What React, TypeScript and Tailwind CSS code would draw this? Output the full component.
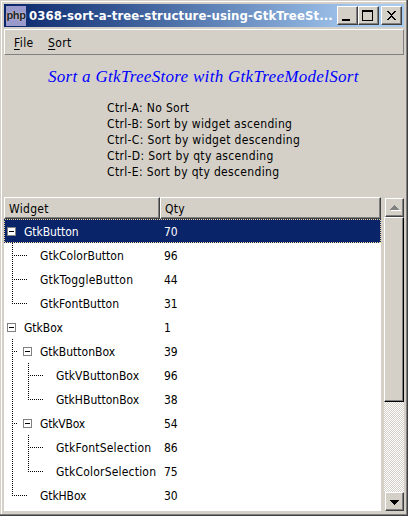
import type { ReactNode } from "react";

type Row = {
  name: string;
  qty: number;
  level: number;
  parent?: boolean;
  selected?: boolean;
  // dotted guide segments inside the 24px row: [x1, y1, x2, y2]
  lines?: number[][];
  spacing: string;
};

const mid = [8.5, 0, 8.5, 24];
const end = [8.5, 0, 8.5, 13];
const leaf = [8, 12.5, 23, 12.5];
const subMid = [24.5, 0, 24.5, 24];
const subEnd = [24.5, 0, 24.5, 13];
const subLeaf = [24, 12.5, 39, 12.5];
const stub = [8, 12.5, 13, 12.5];

const rows: Row[] = [
  { name: "GtkButton", qty: 70, level: 0, parent: true, selected: true, spacing: "tracking-[-0.05px]" },
  { name: "GtkColorButton", qty: 96, level: 1, lines: [mid, leaf], spacing: "tracking-[0.05px]" },
  { name: "GtkToggleButton", qty: 44, level: 1, lines: [mid, leaf], spacing: "tracking-[0.25px]" },
  { name: "GtkFontButton", qty: 31, level: 1, lines: [end, leaf], spacing: "tracking-[0.05px]" },
  { name: "GtkBox", qty: 1, level: 0, parent: true, spacing: "tracking-[0px]" },
  { name: "GtkButtonBox", qty: 39, level: 1, parent: true, lines: [mid, stub], spacing: "tracking-[0px]" },
  { name: "GtkVButtonBox", qty: 96, level: 2, lines: [mid, subMid, subLeaf], spacing: "tracking-[0.05px]" },
  { name: "GtkHButtonBox", qty: 38, level: 2, lines: [mid, subEnd, subLeaf], spacing: "tracking-[0px]" },
  { name: "GtkVBox", qty: 54, level: 1, parent: true, lines: [mid, stub], spacing: "tracking-[-0.2px]" },
  { name: "GtkFontSelection", qty: 86, level: 2, lines: [mid, subMid, subLeaf], spacing: "tracking-[0.2px]" },
  { name: "GtkColorSelection", qty: 75, level: 2, lines: [mid, subEnd, subLeaf], spacing: "tracking-[0.2px]" },
  { name: "GtkHBox", qty: 30, level: 1, lines: [end, leaf], spacing: "tracking-[-0.1px]" },
];

const indent = ["w-[20px]", "w-[36px]", "w-[52px]"];

function Caption({ children, className }: { children: ReactNode; className: string }) {
  return (
    <div className={`h-[19px] shrink-0 border border-t-white border-l-white border-r-[#404040] border-b-[#404040] bg-[#d4d0c8] ${className}`}>
      <div className="h-full border-r border-b border-[#808080]">{children}</div>
    </div>
  );
}

function Tree({ row }: { row: Row }) {
  const x = row.level * 16 + 3;
  return (
    <svg className={`h-[24px] shrink-0 ${indent[row.level]}`} shapeRendering="crispEdges">
      {row.lines?.map(([x1, y1, x2, y2], i) => (
        <line key={i} x1={x1} y1={y1} x2={x2} y2={y2} stroke="#000" strokeDasharray="1 1" />
      ))}
      {row.parent && (
        <g>
          <rect x={x + 0.5} y="8.5" width="8" height="8" fill="#fff" stroke="#808080" />
          <path d={`M${x + 2} 12.5h5`} stroke="#000" />
        </g>
      )}
    </svg>
  );
}

export default function App() {
  return (
    <div className="flex h-[516px] w-[408px] flex-col overflow-hidden border-r border-b border-[#404040] bg-[#d4d0c8] font-['DejaVu_Sans_Condensed','DejaVu_Sans',sans-serif] text-[12px] whitespace-nowrap text-black">
      <div className="flex min-h-0 flex-1 flex-col border-r border-b border-[#808080] pt-px pl-px">
        <div className="flex min-h-0 flex-1 flex-col border-t border-l border-white pt-[2px] pr-[2px] pb-[3px] pl-[2px]">
          <div className="flex h-[23px] shrink-0 items-center bg-linear-to-r from-[#0a246a] to-[#a6caf0] to-90% pr-[2px] pl-[2px]">
            <div className="h-[20px] w-[20px] shrink-0 bg-[#9999cc] text-center font-['Liberation_Sans',sans-serif] text-[11px] leading-[18px] font-bold tracking-[-0.4px] text-[#222] [text-shadow:0_0_1px_#ccccd8,0_0_2px_#ccccd8]">
              php
            </div>
            <div className="ml-[3px] w-[308px] shrink-0 text-[13px] leading-[22px] font-bold tracking-[0.11px] text-white">
              0368-sort-a-tree-structure-using-GtkTreeSt...
            </div>
            <Caption className="w-[21px]">
              <svg className="h-[16px] w-[18px]" shapeRendering="crispEdges">
                <rect x="4" y="12" width="8" height="2" />
              </svg>
            </Caption>
            <Caption className="w-[21px]">
              <svg className="h-[16px] w-[18px]" shapeRendering="crispEdges">
                <path d="M3 3h11v11h-11z M4 5v8h9v-8z" fillRule="evenodd" />
              </svg>
            </Caption>
            <Caption className="ml-[2px] w-[21px]">
              <svg className="h-[16px] w-[18px]" shapeRendering="crispEdges">
                <path d="M5 4h2v1h1v1h1v1h1v-1h1v-1h1v-1h2v1h-1v1h-1v1h-1v1h-1v1h1v1h1v1h1v1h1v1h-2v-1h-1v-1h-1v-1h-1v1h-1v1h-1v1h-2v-1h1v-1h1v-1h1v-1h1v-1h-1v-1h-1v-1h-1v-1h-1z" />
              </svg>
            </Caption>
          </div>

          <div className="mt-[2px] flex h-[26px] shrink-0 border border-t-white border-r-[#808080] border-b-[#808080] border-l-white pl-[9px] leading-[26px] tracking-[0.4px]">
            <div className="w-[34px]"><span className="underline underline-offset-2">F</span>ile</div>
            <div><span className="underline underline-offset-2">S</span>ort</div>
          </div>

          <div className="h-[142px] shrink-0">
            <div className="pt-[10px] pl-[44px] font-['Liberation_Serif',serif] text-[17px] leading-[24px] tracking-[0.3px] text-[#0000ff] italic">
              Sort a GtkTreeStore with GtkTreeModelSort
            </div>
            <div className="mt-[11px] pl-[103px] leading-[16px] tracking-[0.34px]">
              <div>Ctrl-A: No Sort</div>
              <div>Ctrl-B: Sort by widget ascending</div>
              <div>Ctrl-C: Sort by widget descending</div>
              <div>Ctrl-D: Sort by qty ascending</div>
              <div>Ctrl-E: Sort by qty descending</div>
            </div>
          </div>

          <div className="flex min-h-0 flex-1">
            <div className="flex w-[377px] flex-col bg-white">
              <div className="flex h-[22px] shrink-0">
                {["Widget", "Qty"].map((label, i) => (
                  <div key={label} className={`border border-t-white border-l-white border-r-[#404040] border-b-[#404040] bg-[#d4d0c8] ${i ? "w-[221px]" : "w-[156px]"}`}>
                    <div className="h-full border-r border-b border-[#808080] pl-[4px] leading-[22px] tracking-[0.3px]">{label}</div>
                  </div>
                ))}
              </div>
              {rows.map((row) => (
                <div key={row.name} className={`relative flex h-[24px] shrink-0 leading-[26px] ${row.selected ? "bg-[#0a246a] text-white" : ""}`}>
                  <div className="flex w-[160px]">
                    <Tree row={row} />
                    <span className={row.spacing}>{row.name}</span>
                  </div>
                  <span>{row.qty}</span>
                  {row.selected && (
                    <svg className="absolute inset-0 h-full w-full" shapeRendering="crispEdges">
                      <rect x="0.5" y="0.5" width="376" height="23" fill="none" stroke="#f5db95" strokeDasharray="1 1" />
                    </svg>
                  )}
                </div>
              ))}
            </div>

            <div className="ml-[3px] flex w-[20px] flex-col pt-px">
              <Caption className="ml-px w-[19px]">
                <svg className="h-[16px] w-[16px]" shapeRendering="crispEdges">
                  <path d="M5 11h10v1h-10z" fill="#fff" />
                  <path d="M8 6h1v1h1v1h1v1h1v1h1v1h-9v-1h1v-1h1v-1h1v-1h1z" fill="#808080" />
                </svg>
              </Caption>
              <div className="h-[185px] shrink-0 border border-t-white border-r-black border-b-black border-l-white">
                <div className="h-full border-r border-b border-[#808080]" />
              </div>
              <div className="flex-1 bg-[conic-gradient(#d4d0c8_25%,#fff_0_50%,#d4d0c8_0_75%,#fff_0)] bg-size-[2px_2px]" />
              <Caption className="ml-px w-[19px]">
                <svg className="h-[16px] w-[16px]" shapeRendering="crispEdges">
                  <path d="M4 7h9v1h-1v1h-1v1h-1v1h-1v1h-1v-1h-1v-1h-1v-1h-1v-1h-1z" />
                </svg>
              </Caption>
            </div>
          </div>
        </div>
      </div>
    </div>
  );
}
